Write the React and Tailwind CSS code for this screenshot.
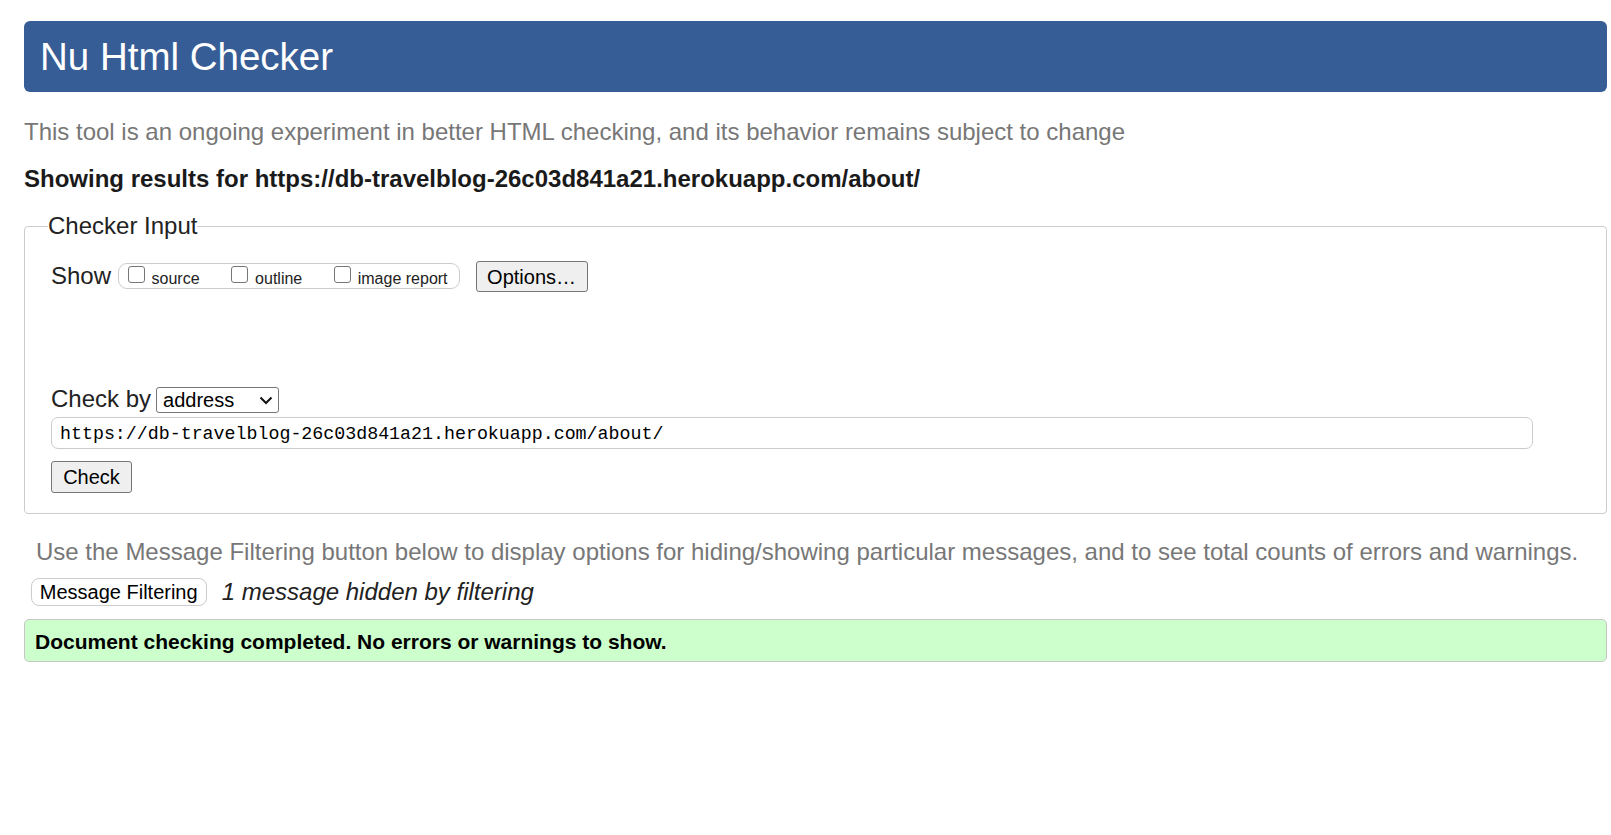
import React from "react"

const url = "https://db-travelblog-26c03d841a21.herokuapp.com/about/"

function Box({ label }) {
  return (
    <label className="flex items-end">
      <span className="mb-[4.5px] inline-block h-[17px] w-[17px] rounded-[3px] border border-[#767676] bg-white" />
      <span className="ml-[7px] text-[16px] leading-[18px] text-[#222]">{label}</span>
    </label>
  )
}

export default function App() {
  return (
    <div className="min-h-screen bg-white pl-[24px] pr-[4px] pt-[21px] font-['Liberation_Sans',Arial,sans-serif] text-[#222]">
      {/* Title bar */}
      <header className="flex h-[71px] items-center rounded-[6px] bg-[#365d95] pl-[16px] pr-[15px]">
        <h1 className="mt-[1px] text-[38.5px] leading-none text-white">Nu Html Checker</h1>
      </header>

      <p className="mt-[28px] text-[24px] leading-[24px] text-[#777]">
        This tool is an ongoing experiment in better HTML checking, and its behavior remains subject to change
      </p>

      <p className="mt-[22px] text-[24px] font-bold leading-[26px] text-[#1a1a1a]">
        Showing results for {url}
      </p>

      {/* Checker input */}
      <fieldset className="mt-[21px] rounded-[4px] border border-[#cccccc] pb-[20px] pl-[22px]">
        <legend className="ml-[1px] text-[24px] leading-[26px] text-[#222]">Checker Input</legend>

        <div className="pl-[4px]">
          <div className="mt-[22px] flex h-[31px] items-start">
            <span className="mt-[0.5px] text-[24px] leading-[28px]">Show</span>
            <div className="ml-[6.5px] mt-[1.8px] flex h-[26px] items-center gap-[31.5px] rounded-[9px] border border-[#cccccc] pl-[9px] pr-[11px] pt-[2px]">
              <Box label="source" />
              <Box label="outline" />
              <Box label="image report" />
            </div>
            <button className="ml-[16px] h-[31px] w-[112px] rounded-[3px] border border-[#767676] bg-[#efefef] text-[20px] leading-none text-black">
              Options…
            </button>
          </div>

          <div className="mt-[93px] flex items-start">
            <span className="text-[24px] leading-[28px]">Check by</span>
            <div className="ml-[5px] mt-[2px] flex h-[26px] w-[123px] items-center justify-between rounded-[3px] border border-[#767676] bg-white pl-[6px] pr-[5px]">
              <span className="text-[20px] leading-none text-black">address</span>
              <svg width="14" height="9" viewBox="0 0 14 9" fill="none">
                <path d="M1.5 1.5 L7 7 L12.5 1.5" stroke="#111" strokeWidth="2" />
              </svg>
            </div>
          </div>

          <div className="mt-[4px] flex h-[32px] w-[1482px] items-center rounded-[7px] border border-[#cccccc] bg-white pl-[8px] pt-[3px]">
            <span className="font-['Liberation_Mono','DejaVu_Sans_Mono',monospace] text-[18.3px] leading-none text-black">
              {url}
            </span>
          </div>

          <button className="mt-[11.5px] h-[32px] w-[81px] rounded-[3px] border border-[#767676] bg-[#efefef] text-[20px] leading-none text-black">
            Check
          </button>
        </div>
      </fieldset>

      <p className="mt-[24.5px] pl-[12px] text-[24px] leading-[28px] text-[#777]">
        Use the Message Filtering button below to display options for hiding/showing particular messages, and to see total counts of errors and warnings.
      </p>

      <div className="mt-[12px] flex items-center pl-[6.7px]">
        <button className="h-[27.4px] w-[176px] rounded-[8px] border border-[#cccccc] bg-white text-[20px] leading-none text-black">
          Message Filtering
        </button>
        <span className="ml-[15px] text-[24px] italic leading-[28px] text-[#222]">1 message hidden by filtering</span>
      </div>

      {/* Result */}
      <div className="mt-[13px] flex h-[43px] items-center rounded-[5px] border border-[#c6c6c6] bg-[#ccffcc] pl-[10px]">
        <span className="mt-[1px] text-[21px] font-bold leading-none text-black">
          Document checking completed. No errors or warnings to show.
        </span>
      </div>
    </div>
  )
}
